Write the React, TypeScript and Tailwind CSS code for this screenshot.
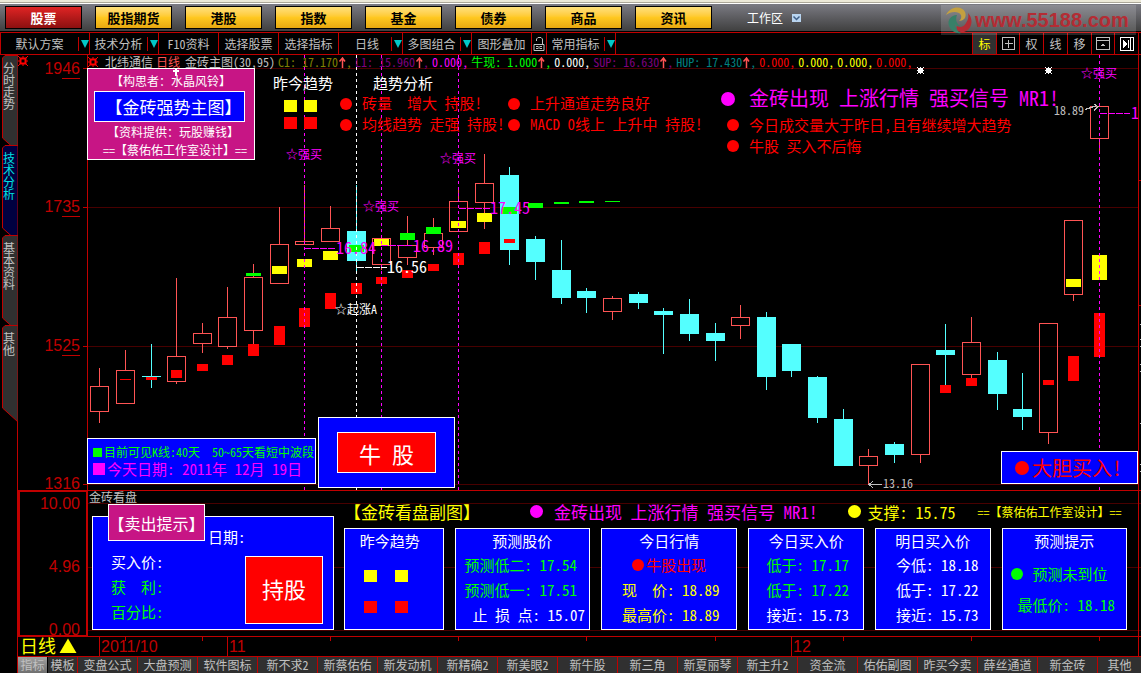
import type { ReactNode } from "react";

const markets = ["股票", "股指期货", "港股", "指数", "基金", "债券", "商品", "资讯"];

const bottomTabs = [
  "变盘公式", "大盘预测", "软件图标", "新不求2", "新蔡佑佑", "新发动机", "新精确2", "新美眼2", "新牛股",
  "新三角", "新夏丽琴", "新主升2", "资金流", "佑佑副图", "昨买今卖", "薛丝通道", "新金砖",
];

const sideTabs = ["分时走势", "技术分析", "基本资料", "其他"];

// kind, centre, body top, body bottom, wick top, wick bottom
type Candle = ["up" | "down", number, number, number, number, number];
const candles: Candle[] = [
  ["up", 99, 386, 411, 368, 423],
  ["up", 125, 370, 403, 350, 403],
  ["down", 151, 376, 377, 344, 388],
  ["up", 176, 356, 381, 278, 384],
  ["up", 202, 333, 343, 323, 353],
  ["up", 227, 317, 346, 287, 349],
  ["up", 253, 277, 330, 264, 345],
  ["up", 279, 244, 283, 207, 283],
  ["up", 304, 241, 244, 185, 244],
  ["up", 330, 228, 241, 206, 241],
  ["down", 356, 231, 261, 185, 272],
  ["up", 381, 238, 264, 238, 270],
  ["up", 407, 245, 257, 216, 265],
  ["up", 433, 233, 247, 218, 255],
  ["up", 458, 201, 231, 190, 231],
  ["up", 484, 183, 202, 154, 229],
  ["down", 509, 175, 250, 167, 265],
  ["down", 535, 239, 262, 236, 280],
  ["down", 561, 270, 298, 240, 304],
  ["down", 586, 291, 298, 288, 313],
  ["up", 612, 298, 311, 296, 320],
  ["down", 638, 294, 303, 292, 309],
  ["down", 663, 311, 315, 308, 354],
  ["down", 689, 314, 334, 299, 341],
  ["down", 715, 333, 341, 323, 361],
  ["up", 740, 317, 325, 305, 339],
  ["down", 766, 317, 377, 312, 390],
  ["down", 791, 344, 371, 344, 377],
  ["down", 817, 377, 418, 376, 423],
  ["down", 843, 419, 466, 409, 466],
  ["up", 868, 456, 465, 449, 484],
  ["down", 894, 444, 455, 442, 463],
  ["up", 920, 364, 454, 364, 463],
  ["down", 945, 350, 355, 324, 385],
  ["up", 971, 342, 374, 317, 378],
  ["down", 997, 360, 394, 352, 410],
  ["down", 1022, 409, 417, 373, 430],
  ["up", 1048, 323, 432, 323, 444],
  ["up", 1073, 220, 294, 220, 301],
  ["up", 1099, 106, 138, 106, 154],
];

const redBlocks = [
  [125, 379, 380], [151, 377, 380], [176, 370, 378], [202, 364, 371], [227, 355, 365], [253, 344, 356],
  [279, 326, 345], [304, 308, 327], [330, 293, 309], [356, 283, 294], [381, 277, 284], [407, 270, 278],
  [433, 264, 271], [458, 253, 265], [484, 242, 254], [509, 239, 243], [945, 385, 393], [971, 378, 386],
  [1048, 380, 385], [1073, 356, 381], [1099, 313, 357],
];
const yellowBlocks = [
  [279, 266, 274], [304, 259, 267], [330, 251, 260], [381, 239, 246], [458, 221, 228], [484, 213, 222],
  [1073, 279, 287], [1099, 255, 280],
];
const greenBlocks = [
  [253, 273, 276], [356, 245, 252], [407, 233, 240], [433, 227, 234], [509, 207, 214], [535, 203, 208],
  [561, 202, 204], [586, 201, 203], [612, 201, 202],
];

const M = "#ff00ff";
const R = "#ff0000";
const W = "#ffffff";
const G = "#c0c0c0";
const UP = "#ff5454";
const DOWN = "#54ffff";

function Note({ x, y, s, c, children }: { x: number; y: number; s: number; c: string; children: ReactNode }) {
  return (
    <text x={x} y={y} fontSize={s} fill={c} className="whitespace-pre">
      {children}
    </text>
  );
}

function Burst({ x, y, c }: { x: number; y: number; c: string }) {
  const spikes = [[-3, -3], [0, -3], [3, -3], [-3, 0], [3, 0], [-3, 3], [0, 3], [3, 3]];
  return (
    <g fill={c} shapeRendering="crispEdges">
      <rect x={x - 2} y={y - 2} width="5" height="5" />
      {spikes.map(([dx, dy]) => <rect key={`${dx},${dy}`} x={x + dx} y={y + dy} width="1" height="1" />)}
    </g>
  );
}

function MainChart() {
  const axis: [number, string][] = [[69, "1946"], [207, "1735"], [346, "1525"], [484, "1316"]];
  return (
    <svg viewBox="18 55 1123 435" className="block h-auto w-full overflow-visible" role="img" aria-label="金砖主图">
      <g shapeRendering="crispEdges">
        {axis.map(([y]) => (
          <g key={y}>
            <rect x="88" y={y - (y === 69 ? 1 : 0)} width="1050" height="1" fill="#480000" />
            <rect x="83" y={y - (y === 69 ? 1 : 0)} width="5" height="1" fill="#c00000" />
            {y !== 484 && <rect x="62" y={y + 9} width="18" height="1" fill="#c00000" />}
          </g>
        ))}
        <rect x="87" y="55" width="1" height="435" fill="#c00000" />
        <rect x="1138" y="55" width="1" height="435" fill="#c00000" />
        {[180, 305].map((y) => <rect key={y} x="1139" y={y} width="2" height="1" fill="#c00000" />)}
        {[324, 339, 346, 364, 371, 423, 464, 471].map((y) => <rect key={y} x="1140" y={y} width="1" height="1" fill={G} />)}

        {candles.map(([kind, c, top, bottom, high, low]) =>
          kind === "down" ? (
            <g key={c} fill={DOWN}>
              <rect x={c} y={high} width="1" height={low - high} />
              <rect x={c - 9} y={top} width="19" height={bottom - top} />
            </g>
          ) : (
            <g key={c} fill={UP}>
              <rect x={c} y={high} width="1" height={top - high} />
              <rect x={c} y={bottom} width="1" height={low - bottom} />
              <rect x={c - 9 + 0.5} y={top + 0.5} width="18" height={bottom - top} fill="none" stroke={UP} />
            </g>
          ),
        )}
        {redBlocks.map(([c, t, b]) => <rect key={c} x={c - 5} y={t} width="11" height={b - t} fill={R} />)}
        {yellowBlocks.map(([c, t, b]) => <rect key={c} x={c - 7} y={t} width="15" height={b - t} fill="#ffff00" />)}
        {greenBlocks.map(([c, t, b]) => <rect key={c} x={c - 7} y={t} width="15" height={b - t} fill="#00ff00" />)}

        {[304, 381, 458, 1099].map((x) => (
          <path key={x} d={`M${x + 0.5} 55V490`} stroke={M} strokeDasharray="3 3" />
        ))}
        <path d="M356.5 55V490" stroke={W} strokeDasharray="3 3" />

        <path d="M304 248.5H336M381 245.5H412M459 208.5H490M1100 113.5H1130" stroke={M} strokeDasharray="7 1" />
        <path d="M357 267.5H387" stroke={W} strokeDasharray="7 1" />
        <path d="M869 484.5H882M873 481l-4 3.500l4 3.500M1085 109.500l12-4M1094 104l4 2.500l-4 4" stroke={G} fill="none" />
        {[284, 304].map((x) => (
          <g key={x}>
            <rect x={x} y="100" width="13" height="12" fill="#ffff00" />
            <rect x={x} y="117" width="13" height="12" fill={R} />
          </g>
        ))}
      </g>

      {[[346, 104], [346, 125], [514, 104], [514, 125], [733, 125], [733, 146]].map(([x, y]) => (
        <circle key={`${x}-${y}`} cx={x} cy={y} r="6" fill={R} />
      ))}
      <circle cx="728" cy="99" r="7" fill={M} />
      <Burst x={920} y={70} c={W} />
      <Burst x={1048} y={70} c={W} />

      <g className="font-['Liberation_Sans',sans-serif]" fill="#c00000" fontSize="16" textAnchor="end">
        {axis.map(([y, label]) => (
          <text key={y} x="80" y={y + 5}>{label}</text>
        ))}
      </g>

      <Note x={273} y={89} s={15} c={W}>昨今趋势</Note>
      <Note x={373} y={89} s={15} c={W}>趋势分析</Note>
      <Note x={362} y={109} s={15} c={R}>{"砖量  增大 持股!"}</Note>
      <Note x={362} y={130} s={15} c={R}>均线趋势 走强 持股!</Note>
      <Note x={530} y={109} s={15} c={R}>上升通道走势良好</Note>
      <Note x={530} y={130} s={15} c={R}>MACD 0线上 上升中 持股!</Note>
      <Note x={749} y={106} s={20} c={M}>金砖出现 上涨行情 强买信号 MR1!</Note>
      <Note x={749} y={131} s={15} c={R}>今日成交量大于昨日,且有继续增大趋势</Note>
      <Note x={749} y={152} s={15} c={R}>牛股 买入不后悔</Note>
      <Note x={286} y={159} s={12} c={M}>☆强买</Note>
      <Note x={440} y={163} s={12} c={M}>☆强买</Note>
      <Note x={363} y={211} s={12} c={M}>☆强买</Note>
      <Note x={1081} y={78} s={12} c={M}>☆强买</Note>
      <Note x={336} y={254} s={16} c={M}>16.84</Note>
      <Note x={413} y={252} s={16} c={M}>16.89</Note>
      <Note x={490} y={214} s={16} c={M}>17.45</Note>
      <Note x={387} y={273} s={16} c={W}>16.56</Note>
      <Note x={335} y={314} s={12} c={W}>☆起涨A</Note>
      <Note x={1054} y={115} s={12} c={G}>18.89</Note>
      <Note x={883} y={488} s={12} c={G}>13.16</Note>
      <Note x={1131} y={119} s={16} c={M}>1</Note>
    </svg>
  );
}

function Ind({ label, up, className }: { label: string; up?: boolean; className: string }) {
  return (
    <span className={`flex items-center whitespace-pre ${className}`}>
      {label}
      {up && (
        <svg viewBox="0 0 8 11" className="h-[11px] w-2" aria-hidden="true">
          <path d="M4.500 11V1M1.500 4.500L4.500 1L7 4.500" stroke="#ff5454" strokeWidth="1.500" fill="none" />
        </svg>
      )}
      ,
    </span>
  );
}

function Gear({ className }: { className: string }) {
  return (
    <svg viewBox="0 0 10 10" className={className} aria-hidden="true" fill="none" stroke="#ff0000">
      <rect x="2.500" y="2.500" width="5" height="5" strokeWidth="2" />
      <path d="M0 0l2 2M10 0L8 2M0 10l2-2M10 10L8 8M5 0v2M5 8v2M0 5h2M8 5h2" />
    </svg>
  );
}

function IndicatorLine() {
  return (
    <div className="absolute left-[70px] top-0 flex h-[14px] items-center gap-[3px] text-xs leading-none text-[#c0c0c0]">
      <Gear className="mr-1 h-[10px] w-[10px]" />
      <span>北纬通信</span>
      <span className="text-[#ff5454]">日线</span>
      <span className="ml-[2px]">金砖主图(30,95)</span>
      <Ind label="C1: 17.170" up className="text-[#808000]" />
      <Ind label="L1: 15.960" up className="text-[#800080]" />
      <Ind label="0.000" className="text-[#ff00ff]" />
      <Ind label="牛现: 1.000" up className="text-[#00ff00]" />
      <Ind label="0.000" className="text-white" />
      <Ind label="SUP: 16.630" up className="text-[#800080]" />
      <Ind label="HUP: 17.430" up className="text-[#008080]" />
      <Ind label="0.000" className="text-[#ff0000]" />
      <Ind label="0.000" className="text-[#ffff00]" />
      <Ind label="0.000" className="text-[#ffff00]" />
      <Ind label="0.000" className="text-[#ff0000]" />
    </div>
  );
}

function ToolCell({ label, menu, className }: { label: string; menu?: boolean; className: string }) {
  return (
    <button type="button" className={`flex shrink-0 items-center border-r border-[#c00000] ${className}`}>
      <span className="grow text-center">{label}</span>
      {menu && (
        <svg viewBox="0 0 11 14" className="h-[14px] w-[11px]" aria-hidden="true">
          <path d="M0.500 0V14" stroke="#c00000" />
          <path d="M3 3h8l-4 8z" fill="#00c8c8" />
        </svg>
      )}
    </button>
  );
}

function IconCell({ label, children, className = "w-6" }: { label: string; children: ReactNode; className?: string }) {
  return (
    <button type="button" aria-label={label} className={`flex shrink-0 items-center justify-center border-l border-[#c00000] ${className}`}>
      {children}
    </button>
  );
}

function Toolbar() {
  return (
    <div className="flex h-[23px] border-y border-[#c00000] pr-[2px] text-xs text-[#c0c0c0]">
      <ToolCell label="默认方案" menu className="w-[90px] border-l" />
      <ToolCell label="技术分析" menu className="w-[69px]" />
      <ToolCell label="F10资料" className="w-[60px]" />
      <ToolCell label="选择股票" className="w-[60px]" />
      <ToolCell label="选择指标" className="w-[60px]" />
      <ToolCell label="日线" menu className="w-16 pl-1" />
      <ToolCell label="多图组合" menu className="w-[69px]" />
      <ToolCell label="图形叠加" className="w-[60px]" />
      <button type="button" aria-label="锁定" className="flex w-[15px] shrink-0 items-center justify-center border-r border-[#c00000]">
        <svg viewBox="0 0 12 14" className="h-[14px] w-3" fill="none" stroke="#c0c0c0">
          <path d="M3.500 4V2L5 .5h3L9.500 2v5M1 7.500h10v6H1zM3 9.500h2M7 9.500h2M3 11.500h2M7 11.500h2M6 9v3" />
        </svg>
      </button>
      <ToolCell label="常用指标" menu className="w-[69px]" />
      <div className="ml-auto flex border-r border-[#c00000]">
        <IconCell label="标" className="w-6 bg-[#303030] text-[#ffff00]">标</IconCell>
        <IconCell label="十字光标" className="w-[23px]">
          <svg viewBox="0 0 13 13" className="h-[13px] w-[13px]" fill="none" stroke="#c0c0c0" shapeRendering="crispEdges">
            <rect x=".5" y=".5" width="12" height="12" rx="1" />
            <path d="M6.500 2.500v8M2.500 6.500h8" />
          </svg>
        </IconCell>
        <IconCell label="权">权</IconCell>
        <IconCell label="线">线</IconCell>
        <IconCell label="移">移</IconCell>
        <IconCell label="向上展开" className="w-[23px]">
          <svg viewBox="0 0 14 13" className="h-[13px] w-[14px]" fill="none" stroke="#c0c0c0" shapeRendering="crispEdges">
            <path d="M.5.5h13v12H.5zM.5 3.500h13" />
            <path d="M4.500 9L7 6l2.500 3z" fill="#c0c0c0" stroke="none" />
          </svg>
        </IconCell>
        <IconCell label="向右展开">
          <svg viewBox="0 0 14 14" className="h-[14px] w-[14px]" fill="none" stroke="#ffffff" shapeRendering="crispEdges">
            <path d="M.5.5h13v13H.5zM8.500 3v8M10.500 1v12" />
            <path d="M3 3l5 4-5 4z" fill="#ffffff" stroke="none" />
          </svg>
        </IconCell>
      </div>
    </div>
  );
}

function TopBar() {
  return (
    <header className="relative">
      <div className="h-[2px] bg-[#ece9d8]" />
      <div className="h-px bg-[#aca899]" />
      <div className="h-px bg-white" />
      <nav className="flex h-[28px] items-center gap-[13px] border-b border-black bg-linear-to-b from-[#7b7b83] to-[#404040] pl-[5px]">
        {markets.map((m, i) => (
          <button
            key={m}
            type="button"
            className={`h-[23px] w-[77px] border border-black bg-linear-to-b text-[13px] font-bold leading-none ${
              i === 0 ? "from-[#e02424] to-[#8c1010] text-white" : "from-[#ffe07a] via-[#ffc820] to-[#e8a810] text-black"
            }`}
          >
            {m}
          </button>
        ))}
        <button type="button" className="ml-[22px] flex items-center gap-[9px] text-xs text-white">
          工作区
          <svg viewBox="0 0 9 8" className="h-2 w-[9px]" aria-hidden="true">
            <rect width="9" height="8" fill="#b8d4f0" />
            <path d="M1.500 2.500l3 3 3-3" stroke="#406088" strokeWidth="1.500" fill="none" />
          </svg>
        </button>
      </nav>
      <a
        href="#home"
        className="absolute right-[5px] top-[5px] z-10 flex h-[30px] w-[195px] items-center gap-[2px] bg-white/15 pl-1 font-['Liberation_Sans',sans-serif] text-[20px] font-bold leading-none text-[#b42c34]"
      >
        <svg viewBox="0 0 28 28" className="h-7 w-7 shrink-0" aria-hidden="true" fill="none">
          <path d="M1 9C5 0 17-1 20 6c2 5-1 9-6 9 3-3 3-6 0-8-4-2-9-1-13 2z" fill="#c4a040" />
          <path d="M12 9C6 9 2 14 4 20c2 5 7 8 12 7-4-2-6-5-6-9 1 2 3 3 5 2-3-2-5-6-3-11z" fill="#388068" />
          <path d="M23 7c6 6 4 17-4 19-5 1-8-2-7-6 3 2 7 1 9-3 2-3 3-6 2-10z" fill="#b42c34" />
        </svg>
        www.55188.com
      </a>
    </header>
  );
}

function SideTabs() {
  return (
    <nav className="w-[18px] shrink-0 border-r border-[#c00000] text-xs leading-3">
      {sideTabs.map((t, i) => (
        <button key={t} type="button" className="relative block h-[90px] w-full">
          <svg viewBox="0 0 18 98" className="absolute left-0 top-0 h-[98px] w-[18px]" aria-hidden="true">
            <path d="M18 .5H5L2.500 3V83L18 97z" fill={i === 1 ? "#000040" : "#303030"} stroke="#c00000" />
          </svg>
          <span className={`absolute left-[3px] top-[7px] w-3 ${i === 1 ? "text-[#00e0e0]" : "text-[#c0c0c0]"}`}>{t}</span>
        </button>
      ))}
    </nav>
  );
}

function Row({ children, className = "" }: { children: ReactNode; className?: string }) {
  return <p className={`flex h-[25px] items-center whitespace-pre ${className}`}>{children}</p>;
}

function Card({ title, children, titleClass = "" }: { title: string; children: ReactNode; titleClass?: string }) {
  return (
    <section className="border border-white bg-[#0000ff] pb-[2px] text-[15px] leading-none text-white">
      <h3 className={`flex h-[23px] items-center justify-center ${titleClass}`}>{title}</h3>
      {children}
    </section>
  );
}

function SubChart() {
  return (
    <section className="relative flex border-y border-[#c00000]">
      <div className="absolute inset-0 flex flex-col pl-[65px] pt-3" aria-hidden="true">
        <div className="h-16 border-t border-[#480000]" />
        <div className="h-[63px] border-t border-[#480000]" />
        <div className="border-t border-[#480000]" />
      </div>
      <div className="relative flex w-[70px] shrink-0 flex-col justify-between border-2 border-t border-b border-[#c00000] bg-black pr-[6px] text-right font-['Liberation_Sans',sans-serif] text-base leading-none text-[#c00000]">
        <span className="pt-1">10.00</span>
        <span>4.96</span>
        <span className="-mb-[3px]">0.00</span>
      </div>
      <div className="relative flex min-w-0 grow gap-[10px] border-r border-[#c00000] pb-[6px] pl-1 pr-[11px]">
        <h2 className="absolute left-[1px] top-0 text-xs leading-none text-[#c0c0c0]">金砖看盘</h2>
        <section className="relative mt-[25px] w-[242px] shrink-0 border border-white bg-[#0000ff] text-[15px] leading-none text-white">
          <h3 className="absolute -top-[13px] left-[15px] flex h-[37px] w-[97px] items-center justify-center whitespace-nowrap border border-white bg-[#c71585] text-base leading-none">
            【卖出提示】
          </h3>
          <p className="pl-[115px] pt-3">日期:</p>
          <div className="pl-[18px] pt-[5px]">
            <Row>买入价:</Row>
            <Row className="text-[#00ff00]">{"获  利:"}</Row>
            <Row className="text-[#00ff00]">百分比:</Row>
          </div>
          <p className="absolute bottom-[5px] right-[10px] flex h-[68px] w-[78px] items-center justify-center border border-white bg-[#ff0000] pb-1 text-[22px]">
            持股
          </p>
        </section>
        <div className="min-w-0 grow">
          <div className="flex h-[37px] items-center whitespace-pre pt-1 text-[17px] leading-none text-[#ffff00]">
            <span>【金砖看盘副图】</span>
            <span className="ml-[50px] h-[13px] w-[13px] rounded-full bg-[#ff00ff]" />
            <span className="ml-[11px] text-[#ff00ff]">金砖出现 上涨行情 强买信号 MR1!</span>
            <span className="ml-[30px] h-[13px] w-[13px] rounded-full bg-[#ffff00]" />
            <span className="ml-[7px] text-base leading-none">支撑: 15.75</span>
            <span className="ml-[22px] text-xs leading-none">==【蔡佑佑工作室设计】==</span>
          </div>
          <div className="grid grid-cols-[100fr_136fr_137fr_116fr_116fr_126fr] gap-[11px]">
            <Card title="昨今趋势" titleClass="pr-2">
              <div className="flex flex-col gap-[19px] pl-[19px] pt-[18px]">
                <div className="flex gap-[18px]">
                  <span className="h-3 w-[13px] bg-[#ffff00]" />
                  <span className="h-3 w-[13px] bg-[#ffff00]" />
                </div>
                <div className="flex gap-[18px]">
                  <span className="h-3 w-[13px] bg-[#ff0000]" />
                  <span className="h-3 w-[13px] bg-[#ff0000]" />
                </div>
              </div>
            </Card>
            <Card title="预测股价">
              <Row className="pl-[9px] text-[#00ff00]">预测低二: 17.54</Row>
              <Row className="pl-[9px] text-[#00ff00]">预测低一: 17.51</Row>
              <Row className="pl-[17px]">止 损 点: 15.07</Row>
            </Card>
            <Card title="今日行情">
              <Row className="justify-center text-[#ff0000]">
                <span className="mr-[2px] h-3 w-3 rounded-full bg-[#ff0000]" />
                牛股出现
              </Row>
              <Row className="pl-5 text-[#ffff00]">{"现  价: 18.89"}</Row>
              <Row className="pl-5 text-[#ffff00]">最高价: 18.89</Row>
            </Card>
            <Card title="今日买入价">
              <Row className="pl-[17px] text-[#00ff00]">低于: 17.17</Row>
              <Row className="pl-[17px] text-[#00ff00]">低于: 17.22</Row>
              <Row className="pl-[17px]">接近: 15.73</Row>
            </Card>
            <Card title="明日买入价">
              <Row className="pl-5">今低: 18.18</Row>
              <Row className="pl-5">低于: 17.22</Row>
              <Row className="pl-5">接近: 15.73</Row>
            </Card>
            <Card title="预测提示">
              <div className="flex flex-col gap-[6px] pt-[9px] text-[#00ff00]">
                <Row className="pl-2">
                  <span className="mr-[10px] h-3 w-3 rounded-full bg-[#00ff00]" />
                  预测未到位
                </Row>
                <Row className="pl-[15px]">最低价: 18.18</Row>
              </div>
            </Card>
          </div>
        </div>
      </div>
      <div className="w-[2px] shrink-0 bg-black" />
    </section>
  );
}

function DateAxis() {
  return (
    <div className="border-b border-[#c00000]">
      <svg viewBox="18 637 1123 19" className="block h-auto w-full overflow-visible" role="img" aria-label="日期">
        <g fill="#c00000" shapeRendering="crispEdges">
          {[99, 227, 791].map((x) => <rect key={x} x={x} y="637" width="1" height="19" />)}
          {[125, 202, 330, 458, 586, 715, 843, 971, 1099].map((x) => <rect key={x} x={x} y="637" width="1" height="4" />)}
          <rect x="1138" y="637" width="1" height="19" />
        </g>
        <text x="20" y="653" fontSize="18" fill="#ffff00">日线</text>
        <path d="M68 638.500L76.500 653h-17z" fill="#ffff00" />
        <g className="font-['Liberation_Sans',sans-serif]" fill="#c00000" fontSize="16">
          <text x="101" y="652">2011/10</text>
          <text x="229" y="652">11</text>
          <text x="793" y="652">12</text>
        </g>
      </svg>
    </div>
  );
}

function BottomTabs() {
  return (
    <nav className="flex h-4 overflow-hidden bg-[#303030] text-xs leading-4 text-[#c0c0c0]">
      <button type="button" className="w-[30px] shrink-0 border-r border-black bg-linear-to-b from-[#a0a0a0] to-[#707070]">指标</button>
      <button type="button" className="w-[29px] shrink-0">模板</button>
      {bottomTabs.map((t) => (
        <button key={t} type="button" className="min-w-0 grow basis-[60px] whitespace-nowrap border-l border-[#c00000]">{t}</button>
      ))}
      <button type="button" className="min-w-0 grow basis-[44px] whitespace-nowrap border-l border-[#c00000]">其他</button>
    </nav>
  );
}

export default function App() {
  return (
    <div className="min-h-screen overflow-hidden bg-black font-['Noto_Sans_Mono_CJK_SC','Noto_Sans_CJK_SC',sans-serif]">
      <TopBar />
      <Toolbar />
      <div className="flex">
        <SideTabs />
        <main className="min-w-0 grow">
          <section className="relative">
            <MainChart />
            <Gear className="absolute left-0 top-[1px] h-[10px] w-[10px]" />
            <IndicatorLine />
            <div className="absolute left-[69px] top-[13px] flex h-[92px] w-[168px] flex-col items-center whitespace-pre border border-white bg-[#c71585] text-xs leading-none text-white">
              <p className="flex h-[22px] items-center pt-[2px]">【构思者：水晶风铃】</p>
              <p className="mr-[3px] flex h-[31px] w-[151px] items-center justify-center border border-white bg-[#0000ff] pl-2 text-[17px]">【金砖强势主图】</p>
              <p className="mt-[1px] flex h-[18px] items-center pl-1">【资料提供：玩股赚钱】</p>
              <p className="flex h-[17px] items-center pl-2">==【蔡佑佑工作室设计】==</p>
              <svg viewBox="0 0 6 8" className="absolute -top-[1px] left-[85px] h-2 w-[6px]" aria-hidden="true">
                <path d="M3 0v8M0 3h6" stroke="#ffffff" strokeWidth="2" />
              </svg>
            </div>
            <div className="absolute left-[69px] top-[383px] flex h-[46px] w-[229px] flex-col justify-center gap-[3px] whitespace-pre border border-white bg-[#0000ff] pl-[5px] leading-none">
              <p className="flex items-center gap-[2px] text-xs leading-none text-[#00ff00]">
                <span className="h-[9px] w-[9px] bg-[#00ff00]" />
                {"目前可见K线:40天  50~65天看短中波段"}
              </p>
              <p className="flex items-center gap-[2px] text-[15px] leading-none text-[#ff00ff]">
                <span className="h-3 w-3 bg-[#ff00ff]" />
                今天日期: 2011年 12月 19日
              </p>
            </div>
            <div className="absolute left-[300px] top-[362px] flex h-[71px] w-[137px] items-center justify-center border border-white bg-[#0000ff]">
              <p className="flex h-[41px] w-[99px] items-center justify-center whitespace-pre border border-white bg-[#ff0000] text-[22px] leading-none text-white">
                牛 股
              </p>
            </div>
            <div className="absolute right-[3px] top-[396px] flex h-[33px] w-[137px] items-center whitespace-pre border border-white bg-[#0000ff] pl-[13px] text-[20px] leading-none text-[#ff0000]">
              <span className="mr-[3px] h-[14px] w-[14px] rounded-full bg-[#ff0000]" />
              大胆买入!
            </div>
          </section>
          <SubChart />
          <DateAxis />
          <BottomTabs />
        </main>
      </div>
    </div>
  );
}
